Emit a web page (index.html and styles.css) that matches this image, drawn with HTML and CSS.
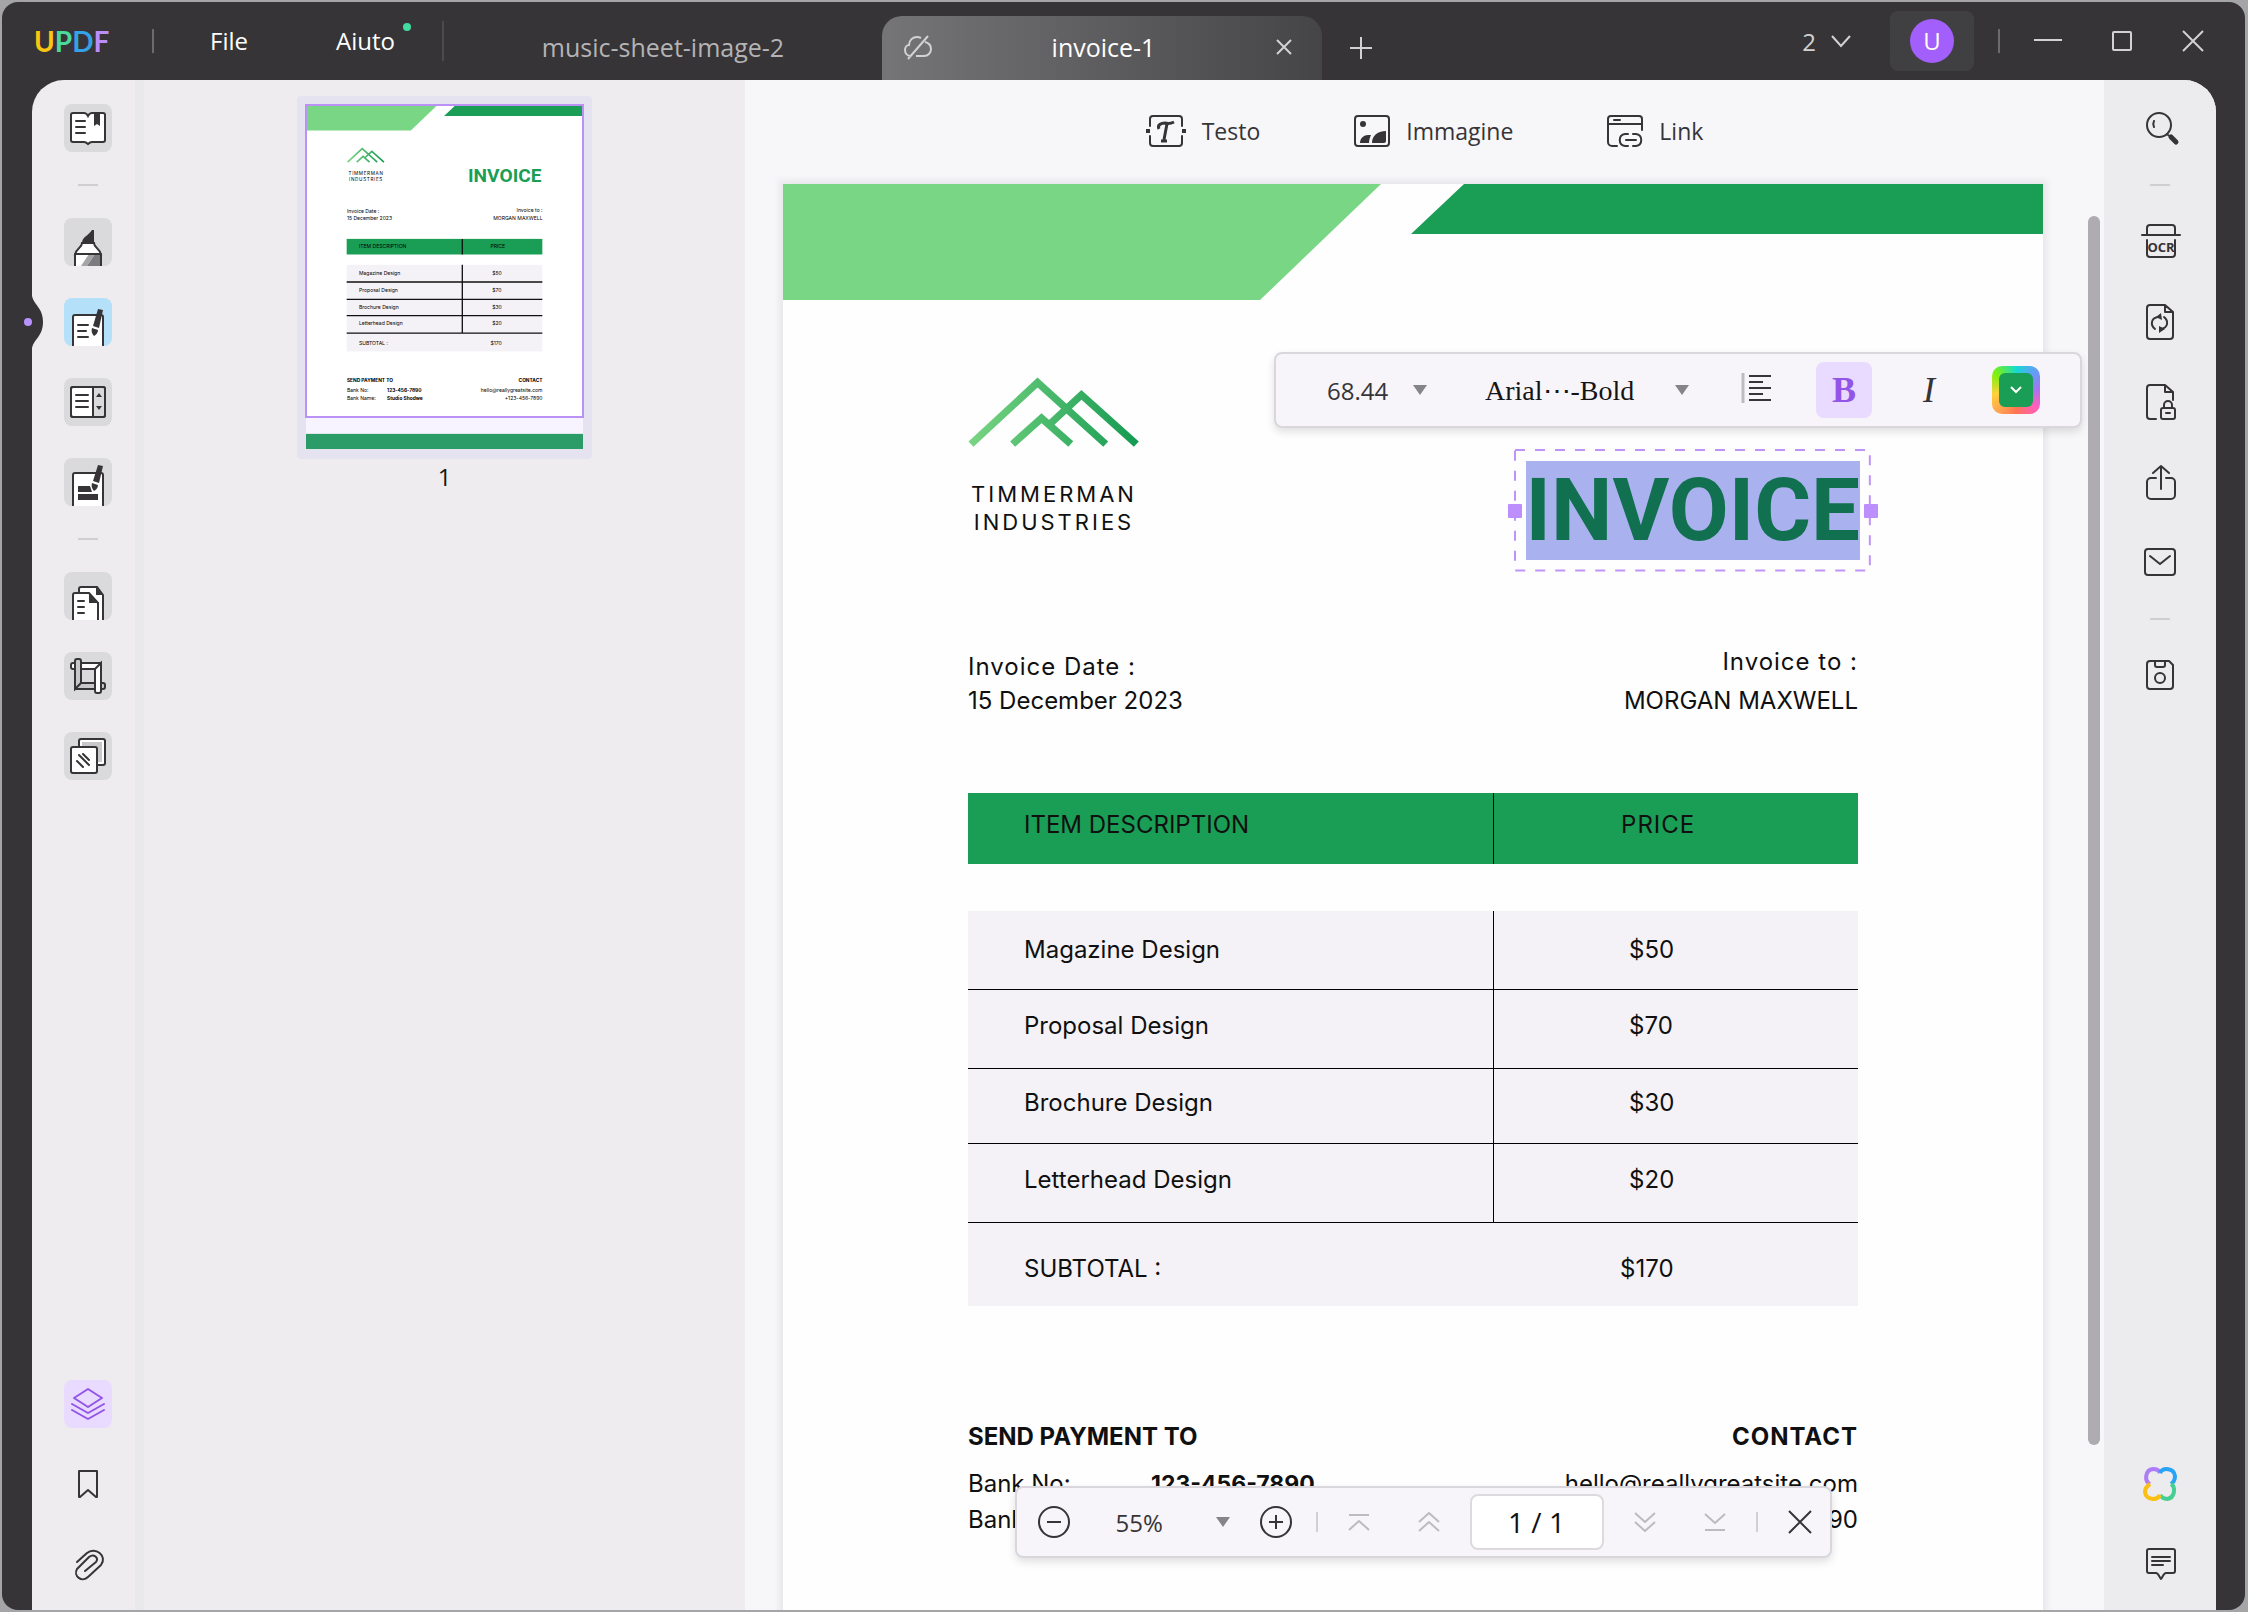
FILE: index.html
```html
<!DOCTYPE html>
<html lang="it">
<head>
<meta charset="utf-8">
<meta name="viewport" content="width=device-width, initial-scale=1">
<title>UPDF - invoice-1</title>
<link rel="stylesheet" href="styles.css">
</head>
<body>
<div class="window">
  <header class="titlebar">
    <div class="brand" aria-label="UPDF"><span class="brand-u">U</span><span class="brand-p">P</span><span class="brand-d">D</span><span class="brand-f">F</span></div>
    <span class="bar-sep"></span>
    <nav class="menu">
      <button type="button">File</button>
      <button type="button" class="has-dot">Aiuto</button>
    </nav>
    <span class="bar-sep tall"></span>
    <div class="tabs">
      <button type="button" class="tab">music-sheet-image-2</button>
      <div class="tab active">
        <svg width="28" height="28" viewBox="0 0 28 28" class="line"><path d="M7 23C3 23 1 20 1 17s2-5 4-5c0-5 4-8 8-8 2 0 3 .5 4 1M21 9c4 1 6 4 6 7 0 4-3 7-7 7h-8M24 3 4 26"/></svg>
        <button type="button" class="tab-name">invoice-1</button>
        <button type="button" aria-label="Chiudi scheda"><svg width="18" height="18" viewBox="0 0 18 18" class="line"><path d="m2 2 14 14M16 2 2 16"/></svg></button>
      </div>
      <button type="button" class="add" aria-label="Nuova scheda"><svg width="24" height="24" viewBox="0 0 24 24" class="line"><path d="M12 1v22M1 12h22"/></svg></button>
    </div>
    <div class="win-tools">
      <button type="button" class="count">2 <svg width="22" height="14" viewBox="0 0 22 14" class="line"><path d="m2 2 9 10 9-10"/></svg></button>
      <button type="button" class="account" aria-label="Account"><span>U</span></button>
      <span class="bar-sep"></span>
      <div class="win-buttons">
        <button type="button" aria-label="Riduci"><svg width="28" height="24" viewBox="0 0 28 24" class="line"><path d="M0 11h28"/></svg></button>
        <button type="button" aria-label="Ingrandisci"><svg width="22" height="22" viewBox="0 0 22 22" class="line"><rect x="2" y="2" width="18" height="18" rx="1"/></svg></button>
        <button type="button" aria-label="Chiudi"><svg width="22" height="22" viewBox="0 0 22 22" class="line"><path d="m1 1 20 20M21 1 1 21"/></svg></button>
      </div>
    </div>
  </header>

  <div class="frame">
    <svg class="notch" width="24" height="52" viewBox="0 0 24 52" aria-hidden="true"><path d="M12 0c2 9 11 12 11 26S14 43 12 52z" fill="#363436"/><circle cx="8" cy="26" r="4" fill="#b892ff"/></svg>
    <div class="panel">
      <aside class="rail rail-left">
        <button type="button" class="tile" aria-label="Lettore"><svg viewBox="0 0 48 48"><path d="M9 9h11c2 0 3 1 4 3 1-2 2-3 4-3h11a2 2 0 0 1 2 2v25a2 2 0 0 1-2 2H28c-2 0-3 1-4 2-1-1-2-2-4-2H9a2 2 0 0 1-2-2V11a2 2 0 0 1 2-2z" class="paper"/><path d="M12 17h9M12 23h9M12 29h9" class="ink"/><path d="M30 9h6v13l-3-2-3 2z" class="solid"/></svg></button>
        <span class="rail-sep"></span>
        <button type="button" class="tile" aria-label="Commento"><svg viewBox="0 0 48 48"><path d="M18 25c0-6 6-7 10-13h2v13z" class="solid"/><path d="M18 25h12c0 5 6 5 7 12H11c1-7 7-7 7-12z" class="paper"/><path d="M11 36h26v14H11z" fill="#fff"/><path d="M25 36h6l-8 12h-6z" fill="#a5a4a6"/><path d="M31 36h6v12H23z" fill="#7c7b7d"/><path d="M11 49V36h26v13" class="ink"/></svg></button>
        <button type="button" class="tile current" aria-label="Modifica PDF"><svg viewBox="0 0 48 48"><path d="M9 50V19a2 2 0 0 1 2-2h26a2 2 0 0 1 2 2v31" class="paper"/><path d="M14 27h10M14 33h8M14 39h10" class="ink"/><path d="m34 11 5 1-4 18-6-2z" class="solid pen"/><path d="m28 30 6 2c0 3-2 5-4 6-2-2-3-5-2-8z" class="solid"/></svg></button>
        <button type="button" class="tile" aria-label="Modulo"><svg viewBox="0 0 48 48"><rect x="7" y="9" width="34" height="30" rx="2" class="paper"/><path d="M29 10h11v28H29z" fill="#dad9db"/><path d="M29 9v30M12 17h12M12 23h12M12 29h12" class="ink"/><path d="m35 15 3 4h-6zM35 32l3-4h-6z" class="solid"/><rect x="7" y="9" width="34" height="30" rx="2" class="ink"/></svg></button>
        <button type="button" class="tile" aria-label="Oscura"><svg viewBox="0 0 48 48"><path d="M9 50V17a2 2 0 0 1 2-2h26a2 2 0 0 1 2 2v33" class="paper"/><path d="M14 28h12l2 6H14zM14 36h20v6H14z" class="solid"/><path d="m34 7 5 1-4 17-6-2z" class="solid pen"/><path d="m28 25 6 2c0 3-2 5-4 6-2-2-3-5-2-8z" class="solid"/></svg></button>
        <span class="rail-sep"></span>
        <button type="button" class="tile" aria-label="Organizza pagine"><svg viewBox="0 0 48 48"><path d="M15 50V17a2 2 0 0 1 2-2h16l6 8v27" class="paper"/><path d="M32 15v8h7z" class="solid"/><path d="M9 50V23a2 2 0 0 1 2-2h14l9 10v19" class="paper"/><path d="M25 21v10h9z" class="solid"/><path d="M14 29h6M14 35h6M14 41h6" class="ink"/></svg></button>
        <button type="button" class="tile" aria-label="Ritaglia"><svg viewBox="0 0 48 48"><path d="M9 11h28v6H9a2 2 0 0 1-2-2v-2a2 2 0 0 1 2-2z" class="paper"/><path d="M11 31h28a2 2 0 0 1 2 2v2a2 2 0 0 1-2 2H11z" class="paper grey"/><path d="M11 37V9a2 2 0 0 1 2-2h2a2 2 0 0 1 2 2v22z" class="paper grey"/><path d="M37 11v28a2 2 0 0 1-2 2h-2a2 2 0 0 1-2-2V17z" class="paper"/></svg></button>
        <button type="button" class="tile" aria-label="Strumenti"><svg viewBox="0 0 48 48"><rect x="15" y="7" width="26" height="26" rx="2" class="paper"/><path d="M18 10h20v20H18z" fill="#c8c7c9"/><rect x="7" y="15" width="26" height="26" rx="2" class="paper"/><path d="m19 22 6 6M15 23l10 10M13 29l6 6" class="ink"/></svg></button>
        <div class="rail-end">
          <button type="button" class="tile violet" aria-label="Livelli"><svg viewBox="0 0 48 48"><path d="m24 9 14 9-14 9-14-9zM8 24l16 9 16-9M8 30l16 9 16-9" class="thin"/></svg></button>
          <button type="button" class="plain" aria-label="Segnalibri"><svg viewBox="0 0 48 48"><path d="M15 11h18v26h-1l-8-7-8 7h-1z" class="ink"/></svg></button>
          <button type="button" class="plain" aria-label="Allegati"><svg viewBox="0 0 48 48"><path d="m13 22 10-9c8-7 21 3 14 12L24 37c-6 6-15-1-11-8l12-12c5-4 10 1 7 5L21 31" class="thin"/></svg></button>
        </div>
      </aside>

      <aside class="thumbs">
        <figure class="thumb">
          <div class="thumb-page">
            <svg viewBox="0 0 1260 1566" class="mini" role="img" aria-label="Anteprima pagina 1">
              <rect width="1260" height="1566" fill="#fff"/>
              <path d="M0 0h598L477 116H0z" fill="#79d684"/><path d="M681 0h579v50H628z" fill="#1a9d55"/>
              <g transform="translate(186 193) scale(.333) translate(-86 -112)" class="peaks"><path d="m95 313 200-185 205 185M335 250l92-85 165 148M220 313l87-78 88 78"/></g>
              <text x="273" y="318" text-anchor="middle" class="spaced">TIMMERMAN</text>
              <text x="273" y="346" text-anchor="middle" class="spaced">INDUSTRIES</text>
              <text x="737" y="350" class="mini-title">INVOICE</text>
              <text x="186" y="492">Invoice Date :</text><text x="186" y="525">15 December 2023</text>
              <text x="1076" y="486" text-anchor="end">Invoice to :</text><text x="1076" y="525" text-anchor="end">MORGAN MAXWELL</text>
              <rect x="185" y="609" width="890" height="71" fill="#1a9d55"/>
              <rect x="185" y="727" width="890" height="394" fill="#f4f2f6"/>
              <path d="M711 609v71M711 727v311M185 805h890M185 884h890M185 958h890M185 1038h890" stroke="#111" stroke-width="6"/>
              <text x="241" y="650">ITEM DESCRIPTION</text><text x="839" y="650">PRICE</text>
              <text x="241" y="774">Magazine Design</text><text x="847" y="774">$50</text>
              <text x="241" y="850">Proposal Design</text><text x="847" y="850">$70</text>
              <text x="241" y="927">Brochure Design</text><text x="847" y="927">$30</text>
              <text x="241" y="1002">Letterhead Design</text><text x="847" y="1002">$20</text>
              <text x="241" y="1093">SUBTOTAL :</text><text x="839" y="1093">$170</text>
              <text x="186" y="1260" class="heavy">SEND PAYMENT TO</text><text x="1076" y="1260" text-anchor="end" class="heavy">CONTACT</text>
              <text x="186" y="1307">Bank No:</text><text x="369" y="1307" class="heavy">123-456-7890</text><text x="1076" y="1307" text-anchor="end">hello@reallygreatsite.com</text>
              <text x="186" y="1343">Bank Name:</text><text x="369" y="1343" class="heavy">Studio Shodwe</text><text x="1076" y="1343" text-anchor="end">+123-456-7890</text>
              <rect y="1496" width="1260" height="70" fill="#1a9d55"/>
            </svg>
            <span class="viewport"></span><span class="veil"></span>
          </div>
          <figcaption>1</figcaption>
        </figure>
      </aside>

      <main class="doc">
        <div class="edit-bar">
          <button type="button"><svg width="40" height="34" viewBox="0 0 40 34"><path d="M4 12V5a3 3 0 0 1 3-3h26a3 3 0 0 1 3 3v7M4 22v7a3 3 0 0 0 3 3h26a3 3 0 0 0 3-3v-7" class="thin"/><path d="M0 15h4v4H0zM36 15h4v4h-4z" class="solid"/><path d="M13 15c-2-4 2-6 6-6 4 1 7 0 9-1M21 10c-1 5-2 10-3 16M15 27h6" class="brush"/></svg>Testo</button>
          <button type="button"><svg width="36" height="34" viewBox="0 0 36 34"><rect x="1" y="2" width="34" height="30" rx="3" class="thin"/><circle cx="9" cy="10" r="3" class="solid"/><path d="M6 29c0-5 4-8 8-8h3c-1 2-2 5-2 8zM18 29c0-7 5-12 14-12v10c0 1-1 2-2 2z" class="solid"/></svg>Immagine</button>
          <button type="button"><svg width="36" height="34" viewBox="0 0 36 34"><path d="M10 32H5a4 4 0 0 1-4-4V5a3 3 0 0 1 3-3h28a3 3 0 0 1 3 3v11M1 10h34M7 6h6M21 20h-3c-7 1-7 11 0 12h3M26 20h3c7 1 7 11 0 12h-3M19 26h10" class="thin"/></svg>Link</button>
        </div>

        <article class="page">
          <svg class="banner" viewBox="0 0 1260 116" aria-hidden="true"><path d="M0 0h598L477 116H0z" fill="#79d684"/><path d="M681 0h579v50H628z" fill="#1a9d55"/></svg>
          <div class="page-body">
            <div class="top">
              <div class="company">
                <svg width="171" height="71" viewBox="86 112 514 212" class="peaks" aria-hidden="true">
                  <defs><linearGradient id="slope" gradientUnits="userSpaceOnUse" x1="86" y1="0" x2="600" y2="0"><stop offset="0" stop-color="#7ad583"/><stop offset="1" stop-color="#139a51"/></linearGradient></defs>
                  <path d="m95 313 200-185 205 185M335 250l92-85 165 148M220 313l87-78 88 78"/>
                </svg>
                <p>TIMMERMAN<br>INDUSTRIES</p>
              </div>
              <div class="text-box">
                <svg class="dashes" aria-hidden="true"><rect x="1" y="1" width="99%" height="98%"/></svg>
                <i class="handle west"></i><i class="handle east"></i>
                <h1 contenteditable="true" spellcheck="false">INVOICE</h1>
              </div>
            </div>
            <div class="meta">
              <p class="meta-date"><span class="tracked">Invoice Date :</span><br>15 December 2023</p>
              <p class="meta-to"><span class="tracked">Invoice to :</span><span>MORGAN MAXWELL</span></p>
            </div>
            <table>
              <thead><tr><th scope="col">ITEM DESCRIPTION</th><th scope="col" class="tracked">PRICE</th></tr></thead>
              <tbody>
                <tr class="r1"><td>Magazine Design</td><td>$50</td></tr>
                <tr class="r2"><td>Proposal Design</td><td>$70</td></tr>
                <tr class="r3"><td>Brochure Design</td><td>$30</td></tr>
                <tr class="r2"><td>Letterhead Design</td><td>$20</td></tr>
                <tr class="total"><td>SUBTOTAL :</td><td>$170</td></tr>
              </tbody>
            </table>
            <div class="footer">
              <section>
                <h2>SEND PAYMENT TO</h2>
                <dl><dt>Bank No:</dt><dd>123-456-7890</dd><dt>Bank Name:</dt><dd>Studio Shodwe</dd></dl>
              </section>
              <section class="contact">
                <h2 class="tracked">CONTACT</h2>
                <p>hello@reallygreatsite.com<br>+123-456-7890</p>
              </section>
            </div>
          </div>
        </article>

        <div class="format-bar" role="toolbar" aria-label="Formato testo">
          <label class="pick size"><select aria-label="Dimensione"><option>68.44</option></select><svg width="14" height="10" viewBox="0 0 14 10"><path d="M0 0h14L7 10z"/></svg></label>
          <label class="pick face"><select aria-label="Carattere"><option>Arial⋯-Bold</option></select><svg width="14" height="10" viewBox="0 0 14 10"><path d="M0 0h14L7 10z"/></svg></label>
          <button type="button" class="align" aria-label="Allineamento"><svg width="30" height="32" viewBox="0 0 30 32"><path d="M2 1v30" stroke="#bdbcbf" stroke-width="3"/><path d="M8 4h22M8 10h14M8 16h22M8 22h14M8 28h22" stroke="#363436" stroke-width="2"/></svg></button>
          <button type="button" class="bold" aria-pressed="true">B</button>
          <button type="button" class="italic">I</button>
          <button type="button" class="colour" aria-label="Colore"><span><svg width="14" height="10" viewBox="0 0 14 10"><path d="m2 2 5 5 5-5"/></svg></span></button>
        </div>

        <div class="zoom-bar" role="toolbar" aria-label="Navigazione pagina">
          <button type="button" aria-label="Riduci zoom"><svg width="32" height="32" viewBox="0 0 32 32" class="thin"><circle cx="16" cy="16" r="15"/><path d="M9 16h14"/></svg></button>
          <label class="pick zoom"><select aria-label="Zoom"><option>55%</option></select><svg width="14" height="10" viewBox="0 0 14 10"><path d="M0 0h14L7 10z"/></svg></label>
          <button type="button" class="zoom-in" aria-label="Aumenta zoom"><svg width="32" height="32" viewBox="0 0 32 32" class="thin"><circle cx="16" cy="16" r="15"/><path d="M9 16h14M16 9v14"/></svg></button>
          <span class="zoom-sep"></span>
          <button type="button" class="dim" aria-label="Prima pagina"><svg width="22" height="20" viewBox="0 0 22 20" class="thin"><path d="M1 3h20M1 18l10-9 10 9"/></svg></button>
          <button type="button" class="dim" aria-label="Pagina precedente"><svg width="22" height="20" viewBox="0 0 22 20" class="thin"><path d="m1 10 10-9 10 9M1 19l10-9 10 9"/></svg></button>
          <input type="text" value="1 / 1" aria-label="Pagina">
          <button type="button" class="dim" aria-label="Pagina successiva"><svg width="22" height="20" viewBox="0 0 22 20" class="thin"><path d="m1 1 10 9 10-9M1 10l10 9 10-9"/></svg></button>
          <button type="button" class="dim" aria-label="Ultima pagina"><svg width="22" height="20" viewBox="0 0 22 20" class="thin"><path d="m1 2 10 9 10-9M1 18h20"/></svg></button>
          <span class="zoom-sep"></span>
          <button type="button" aria-label="Chiudi barra"><svg width="24" height="24" viewBox="0 0 24 24" class="thin"><path d="m1 1 22 22M23 1 1 23"/></svg></button>
        </div>
        <span class="scroll-thumb"></span>
      </main>

      <aside class="rail rail-right">
        <button type="button" class="plain" aria-label="Cerca"><svg viewBox="0 0 48 48"><circle cx="23" cy="21" r="12" class="thin"/><path d="M18 17c-1 2-1 4 0 6M32 31l3 2" class="thin"/><path d="m35 33 5 5" stroke="#363436" stroke-width="5" stroke-linecap="round"/></svg></button>
        <span class="rail-sep"></span>
        <button type="button" class="plain" aria-label="OCR"><svg viewBox="0 0 48 48"><path d="M11 17V10a3 3 0 0 1 3-3h22a3 3 0 0 1 3 3v7M6 17h38M11 22v14a3 3 0 0 0 3 3h22a3 3 0 0 0 3-3V22" class="thin"/><text x="25" y="34" class="ocr">OCR</text></svg></button>
        <button type="button" class="plain" aria-label="Converti"><svg viewBox="0 0 48 48"><path d="M14 7h15l8 7v24a3 3 0 0 1-3 3H14a3 3 0 0 1-3-3V10a3 3 0 0 1 3-3zM29 7v7h8M19 31c-5-4-4-11 3-12M28 19c5 4 4 11-3 12" class="thin"/><path d="m25 15-5 4 6 3zM23 28l6 3-6 4z" class="solid"/></svg></button>
        <button type="button" class="plain" aria-label="Proteggi"><svg viewBox="0 0 48 48"><path d="M20 41h-6a3 3 0 0 1-3-3V10a3 3 0 0 1 3-3h15l8 7v8M29 7v7h8" class="thin"/><rect x="25" y="30" width="14" height="11" rx="2" class="thin"/><path d="M28 30v-3a4 4 0 0 1 8 0v3M30 35h4" class="thin"/></svg></button>
        <button type="button" class="plain" aria-label="Condividi"><svg viewBox="0 0 48 48"><path d="M20 20h-5a4 4 0 0 0-4 4v13a4 4 0 0 0 4 4h20a4 4 0 0 0 4-4V24a4 4 0 0 0-4-4h-5M25 31V9M17 15l8-7 8 7" class="thin"/></svg></button>
        <button type="button" class="plain" aria-label="Invia per email"><svg viewBox="0 0 48 48"><rect x="9" y="11" width="30" height="26" rx="3" class="thin"/><path d="m14 18 10 8 10-8" class="thin"/></svg></button>
        <span class="rail-sep"></span>
        <button type="button" class="plain" aria-label="Salva"><svg viewBox="0 0 48 48"><path d="M14 9h19l4 4v21a3 3 0 0 1-3 3H14a3 3 0 0 1-3-3V12a3 3 0 0 1 3-3zM19 9v4a2 2 0 0 0 2 2h6a2 2 0 0 0 2-2V9" class="thin"/><circle cx="24" cy="26" r="5" class="thin"/></svg></button>
        <div class="rail-end">
          <button type="button" class="plain" aria-label="UPDF AI"><svg viewBox="0 0 48 48" fill="none" stroke-width="4"><path d="M14 24c-6-3-5-14 3-15 3 0 6 1 7 4" stroke="#ae7cf8"/><path d="M24 13c3-6 14-5 15 3 0 3-1 6-4 8" stroke="#27a4f5"/><path d="M35 24c5 3 4 14-4 15-3 0-5-1-7-4" stroke="#45cf92"/><path d="M24 35c-3 6-14 5-15-3 0-3 2-6 5-8" stroke="#fcbf14"/></svg></button>
          <button type="button" class="plain" aria-label="Commenti"><svg viewBox="0 0 48 48"><path d="M13 9h24a2 2 0 0 1 2 2v20a2 2 0 0 1-2 2h-7c-2 0-3 3-5 6-2-3-3-6-5-6h-7a2 2 0 0 1-2-2V11a2 2 0 0 1 2-2zM16 17h18M16 21h18M16 25h11" class="thin"/></svg></button>
        </div>
      </aside>
    </div>
  </div>
</div>
</body>
</html>
```
FILE: styles.css
```css
* { box-sizing: border-box; }

body {
  margin: 0;
  padding: 2px 3px 2px 2px;
  height: 100vh;
  background: #a5a4a7;
  color: #363436;
  font-family: "Open Sans", "Noto Sans", sans-serif;
  font-size: 24px;
  overflow: hidden;
}

button, select, input {
  margin: 0;
  padding: 0;
  border: 0;
  background: none;
  color: inherit;
  font: inherit;
}
svg { display: block; flex: none; }
p, h1, h2, dl, dd, figure { margin: 0; }

.window {
  display: flex;
  flex-direction: column;
  height: 100%;
  background: #363436;
  border-radius: 16px;
  overflow: hidden;
}

/* Title bar */
.titlebar {
  display: flex;
  align-items: center;
  height: 78px;
  flex: none;
  color: #fff;
}
.line { fill: none; stroke: #d2d1d3; stroke-width: 2; }
.brand {
  width: 118px;
  padding-left: 32px;
  font: 700 28px/32px Lato, sans-serif;
}
.brand-u { color: #fbc511; }
.brand-p { color: #4bd89c; }
.brand-d { color: #35a2e8; }
.brand-f { color: #bb8dfb; }
.bar-sep { width: 2px; height: 24px; margin-left: 32px; background: #6b6a6c; }
.bar-sep.tall { height: 40px; margin-left: 0; background: #4b4a4c; }
.menu { display: flex; width: 288px; padding-left: 56px; gap: 88px; }
.menu button { line-height: 32px; position: relative; }
.has-dot::after {
  content: "";
  position: absolute;
  top: -2px;
  right: -16px;
  width: 8px;
  height: 8px;
  border-radius: 50%;
  background: #42dca0;
}
.tabs { display: flex; flex: 1; align-self: stretch; padding-top: 14px; font-size: 25px; }
.tab { width: 438px; padding-bottom: 2px; color: #b4b3b5; display: flex; align-items: center; justify-content: center; }
.tab.active {
  width: 440px;
  padding: 0 29px 2px 22px;
  justify-content: space-between;
  color: #fff;
  border-radius: 20px 20px 0 0;
  background: linear-gradient(90deg, #757477, #454446);
}
.add { padding-left: 27px; }
.win-tools { display: flex; align-items: center; }
.count { display: flex; align-items: center; gap: 14px; color: #d2d1d3; }
.account {
  display: grid;
  place-items: center;
  width: 84px;
  height: 60px;
  margin-left: 38px;
  border-radius: 8px;
  background: #403f41;
}
.account span {
  width: 44px;
  height: 44px;
  border-radius: 50%;
  background: #a35ffb;
  line-height: 44px;
}
.win-tools .bar-sep { margin-left: 24px; }
.win-buttons { display: flex; align-items: center; gap: 49px; padding: 0 41px 0 34px; }

/* Work area */
.frame { position: relative; flex: 1; min-height: 0; padding: 0 29px 0 30px; }
.notch { position: absolute; left: 18px; top: 216px; z-index: 1; }
.panel {
  display: flex;
  height: 100%;
  background: #eeecee;
  border-radius: 32px 32px 0 0;
  overflow: hidden;
}
.rail {
  display: flex;
  flex-direction: column;
  align-items: center;
  gap: 32px;
  width: 112px;
  padding: 24px 0 22px;
  flex: none;
}
.rail-left { padding-right: 1px; border-right: 9px solid #e9e8ea; padding-left: 9px; }
.rail-right { background: #ecebed; }
.rail-sep { width: 20px; height: 2px; background: #cfced0; flex: none; }
.rail-end { display: flex; flex-direction: column; gap: 32px; margin-top: auto; }
.tile, .plain { width: 48px; height: 48px; border-radius: 8px; overflow: hidden; flex: none; }
.tile { background: #dad9db; }
.tile.current { background: #b5e0f9; }
.tile.violet { background: #e9dbff; }
.tile svg, .plain svg { width: 48px; height: 48px; }

.paper { fill: #fff; stroke: #363436; stroke-width: 2; }
.paper.grey { fill: #c8c7c9; }
.ink, .thin { fill: none; stroke: #363436; stroke-width: 2; stroke-linecap: round; stroke-linejoin: round; }
.solid { fill: #363436; }
.brush { fill: none; stroke: #363436; stroke-width: 3; }
.violet .thin { stroke: #9355e6; }
.ocr { font: 700 13px "Open Sans", sans-serif; fill: #363436; text-anchor: middle; }

/* Thumbnails */
.thumbs { flex: 0 1 601px; display: flex; justify-content: center; align-items: flex-start; padding-top: 16px; }
.thumb { text-align: center; }
.thumb-page { position: relative; width: 295px; padding: 9px 9px 10px; background: #e6e3f0; border-radius: 4px; }
.thumb figcaption { font-size: 24px; line-height: 36px; color: #161516; }
.mini { width: 100%; font: 23px Inter, sans-serif; }
.mini .heavy { font-weight: 700; font-size: 22px; }
.mini .spaced { letter-spacing: 3px; font-size: 21px; }
.mini-title { font: 700 87px Roboto, sans-serif; fill: #1a9d55; }
.viewport { position: absolute; left: 8px; right: 8px; top: 8px; height: 314px; border: 2px solid #ba92f5; }
.veil { position: absolute; left: 9px; right: 9px; top: 322px; bottom: 10px; background: #b892ff1c; }

/* Document */
.doc { position: relative; flex: 1; min-width: 0; background: #f7f6f9; overflow: hidden; }
.edit-bar { display: flex; justify-content: center; gap: 94px; height: 104px; padding: 34px 0 36px; font-size: 23px; }
.edit-bar button { display: flex; align-items: center; gap: 16px; line-height: 34px; }
.page { margin: 0 61px 0 38px; height: 100%; background: #fefefe; color: #101010; font: 24px/34px Inter, sans-serif; box-shadow: 0 0 6px 4px #e9e8eb; }
.banner { width: 100%; }
.page-body { padding: 77px 185px 0; }
.top { display: flex; justify-content: space-between; align-items: flex-start; }
.company { width: 172px; text-align: center; line-height: 28px; }
.company p { margin-top: 32px; font-size: 22px; letter-spacing: 3px; white-space: nowrap; }
.tracked { letter-spacing: 1px; }
.peaks path { fill: none; stroke: url(#slope); stroke-width: 22; }
.text-box { position: relative; margin: 72px -14px 0 0; padding: 12px; }
.dashes { position: absolute; inset: 0; width: 100%; height: 100%; fill: none; stroke: #bf94f8; stroke-width: 2; stroke-dasharray: 10 10; }
.text-box h1 { background: #aab1ef; color: #10704f; font: 700 87px/99px Roboto, sans-serif; outline: 0; }
.handle { position: absolute; top: 55px; width: 14px; height: 14px; border-radius: 1px; background: #bd8ffc; }
.west { left: -6px; }
.east { right: -6px; }
.meta { display: flex; justify-content: space-between; padding: 73px 0 75px; }
.meta-date { padding-top: 5px; }
.meta-to { display: grid; gap: 5px; text-align: right; }
table { width: 100%; table-layout: fixed; border-collapse: separate; border-spacing: 0; }
th, td { padding: 22px 0 0 56px; vertical-align: top; text-align: left; font-weight: 400; line-height: 28px; }
th { height: 71px; padding-top: 18px; background: #1a9d55; }
th:first-child { width: 59%; }
th + th, td + td { padding-left: 135px; border-left: 1px solid #000; }
th + th, .total td + td { padding-left: 127px; }
tbody::before { content: ""; display: block; height: 47px; }
td { background: #f4f2f6; border-bottom: 1px solid #000; }
.r1 td { height: 79px; padding-top: 25px; }
.r2 td { height: 79px; }
.r3 td { height: 75px; padding-top: 20px; }
.total td { height: 83px; padding-top: 32px; border: 0; }
.footer { display: flex; justify-content: space-between; padding-top: 114px; line-height: 36px; }
.footer h2 { margin-bottom: 12px; font-size: 24px; line-height: 34px; font-weight: 700; }
.footer dl { display: grid; grid-template-columns: 183px auto; }
.footer dd { font-weight: 700; font-size: 23px; }
.contact { text-align: right; }

/* Floating bars */
.format-bar, .zoom-bar {
  position: absolute;
  display: flex;
  align-items: center;
  background: #f7f5f9;
  border: 2px solid #d9d7db;
  border-radius: 8px;
  box-shadow: 0 4px 8px #0000001f;
}
.format-bar { top: 272px; right: 22px; width: 808px; height: 76px; padding-left: 51px; }
.pick { display: flex; align-items: center; justify-content: space-between; }
.pick select { appearance: none; flex: 1; min-width: 0; outline: 0; }
.pick svg { fill: #858487; }
.size { width: 100px; }
.face { width: 204px; margin-left: 58px; color: #161516; font: 28px "Liberation Serif", serif; }
.align { margin-left: 52px; padding-bottom: 4px; }
.bold, .italic { width: 56px; height: 56px; border-radius: 8px; font: 36px "Liberation Serif", serif; }
.bold { margin-left: 45px; background: #e9dbff; color: #9355e6; font-weight: 700; }
.italic { margin-left: 29px; font-style: italic; }
.colour {
  display: grid;
  place-items: center;
  width: 48px;
  height: 48px;
  margin-left: 35px;
  border-radius: 10px;
  background: conic-gradient(#12dbd0, #5fa0f5 12%, #a873f0 25%, #ff5fc0 36%, #ff7350 50%, #ffa052 60%, #ffd23c 72%, #7cf010 86%, #12dbd0);
}
.colour span { display: grid; place-items: center; width: 34px; height: 34px; border-radius: 6px; background: #1a9d55; }
.colour path { fill: none; stroke: #fff; stroke-width: 2; }
.zoom-bar { left: 50%; bottom: 52px; width: 817px; height: 72px; margin-left: -410px; padding-left: 21px; gap: 30px; }
.zoom-bar .thin { stroke-linecap: butt; }
.zoom { width: 114px; margin-left: 16px; }
.zoom-in { margin-right: -6px; }
.dim .thin { stroke: #bcbbbe; }
.dim + .dim { margin-left: 18px; }
.zoom-sep { width: 2px; height: 20px; background: #d0cfd2; }
.zoom-bar input { width: 134px; height: 56px; background: #fff; border: 2px solid #dcdadd; border-radius: 8px; color: #111; text-align: center; font-size: 28px; }
.scroll-thumb { position: absolute; top: 136px; right: 4px; bottom: 165px; width: 12px; border-radius: 6px; background: #aeacb0; }
```
